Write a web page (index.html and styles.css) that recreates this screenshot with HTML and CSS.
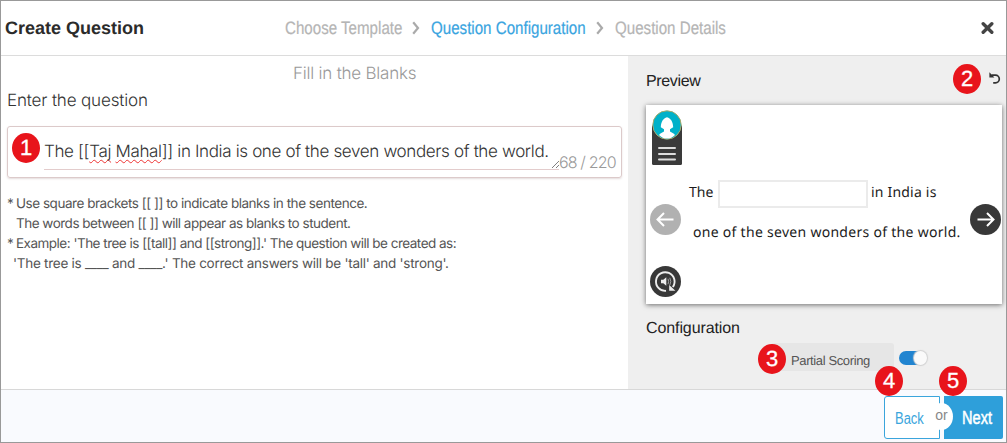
FILE: index.html
```html
<!DOCTYPE html>
<html lang="en">
<head>
<meta charset="utf-8">
<title>Create Question</title>
<link rel="stylesheet" href="styles.css">
</head>
<body>
<div class="dialog">
  <header class="header">
    <h1 class="title">Create Question</h1>
    <nav class="steps">
      <span class="step step-choose"><span class="narrow">Choose Template</span></span>
      <svg class="chevron" width="8" height="14" viewBox="0 0 8 14"><path d="M1.2 1.2 6 7 1.2 12.8"/></svg>
      <span class="step step-config"><span class="narrow">Question Configuration</span></span>
      <svg class="chevron" width="8" height="14" viewBox="0 0 8 14"><path d="M1.2 1.2 6 7 1.2 12.8"/></svg>
      <span class="step step-details"><span class="narrow">Question Details</span></span>
    </nav>
    <svg class="close" width="13" height="12" viewBox="0 0 13 12"><path d="M2.2 1.8 10.8 10.2M10.8 1.8 2.2 10.2"/></svg>
  </header>
  <main class="body">
    <section class="editor">
      <div class="template-name">Fill in the Blanks</div>
      <label class="label">Enter the question</label>
      <div class="question-box">
        <div class="question-field">
          <span>The [[<span class="typo">Taj</span> <span class="typo">Mahal</span>]] in India is one of the seven wonders of the world.</span>
          <svg class="grip" width="7" height="7" viewBox="0 0 7 7"><path d="M0 7 7 0M4 7 7 4"/></svg>
        </div>
        <span class="count">68 / 220</span>
        <span class="marker marker-1">1</span>
      </div>
      <div class="hints">
        <p><span class="star">*</span><span class="hint-use">Use square brackets [[ ]] to indicate blanks in the sentence.</span></p>
        <p><span class="star"></span><span class="hint-words">The words between [[ ]] will appear as blanks to student.</span></p>
        <p><span class="star">*</span><span class="hint-example">Example: 'The tree is [[tall]] and [[strong]].' The question will be created as:</span></p>
        <p><span class="star short"></span><span class="hint-result">'The tree is ____ and ____.' The correct answers will be 'tall' and 'strong'.</span></p>
      </div>
    </section>
    <aside class="side">
      <div class="side-head">
        <h2 class="side-title preview-title">Preview</h2>
        <svg class="reset" width="12" height="12" viewBox="0 0 12 12"><path class="arc" d="M2.500 3.200H6.500a3.800 3.800 0 0 1 0 7.600H4.200"/><path class="head" d="M.4 .2V5.400H5.400Z"/></svg>
        <span class="marker marker-2">2</span>
      </div>
      <div class="preview">
        <div class="rail">
          <svg width="30" height="56" viewBox="0 0 30 56">
            <rect x="0" y="15" width="30" height="40" rx="1.5" fill="#3a3a3a"/>
            <circle cx="15" cy="15" r="14.2" fill="#00b1c9" stroke="#a6aa6b" stroke-width="1"/>
            <path d="M15 7.200c-3.800.8-6 4.800-6.200 10l3.200 2v2.300c-1.800 1.200-3.600 1.700-5 3.400q3.500 3.600 8 3.700 4.500-.1 8-3.700c-1.400-1.700-3.200-2.200-5-3.400v-2.300l3.200-2c-.2-5.200-2.400-9.200-6.200-10Z" fill="#fff"/>
            <path d="M7 38h16M7 44h16M7 49.500h16" stroke="#ddd" stroke-width="2" stroke-linecap="round"/>
          </svg>
          <svg class="prev" width="31" height="31" viewBox="0 0 31 31"><circle cx="15.500" cy="15.500" r="15.500" fill="#b1b1b1"/><path d="M23.500 15.500H8M14 9 7.500 15.500 14 22" class="arrow"/></svg>
          <svg class="replay" width="31" height="31" viewBox="0 0 31 31"><circle cx="15.500" cy="15.500" r="15.500" fill="#383838"/><path d="M16 24.800A9.300 9.300 0 1 1 22.800 21" class="ring"/><path d="M19.200 19v5.800h6.200Z" fill="#eee"/><path d="M11 13.800h2.300l3-2.600v8.600l-3-2.600H11Z" fill="#eee"/><path d="M18 12.800q1.300 2.700 0 5.400M19.800 11.800q2 3.700 0 7.400" fill="none" stroke="#bbb" stroke-width=".8"/></svg>
        </div>
        <div class="sentence">
          <div class="line-one"><span class="before">The</span><span class="blank"></span><span class="after">in India is</span></div>
          <div class="line-two">one of the seven wonders of the world.</div>
        </div>
        <svg class="next-arrow" width="31" height="31" viewBox="0 0 31 31"><circle cx="15.500" cy="15.500" r="15.500" fill="#383838"/><path d="M7.500 15.500H23M17 9 23.500 15.500 17 22" class="arrow"/></svg>
      </div>
      <h2 class="side-title config-title">Configuration</h2>
      <div class="config-row">
        <div class="config-label"><span>Partial Scoring</span><span class="marker marker-3">3</span></div>
        <span class="toggle"><span class="knob"></span></span>
      </div>
    </aside>
  </main>
  <footer class="footer">
    <button class="btn back"><span class="btn-text">Back</span><span class="marker marker-4">4</span></button>
    <button class="btn next"><span class="btn-text">Next</span><span class="or">or</span><span class="marker marker-5">5</span></button>
  </footer>
</div>
</body>
</html>
```
FILE: styles.css
```css
* { box-sizing: border-box; }
body { margin: 0; font-family: "Liberation Sans", Arial, sans-serif; background: #fff; text-rendering: geometricPrecision; }
h1, h2, p { margin: 0; font-weight: 400; }
span { white-space: nowrap; }
svg { display: block; flex: none; }

.dialog { width: 1007px; height: 443px; border: 1px solid #999; display: flex; flex-direction: column; overflow: hidden; }

.header { height: 55px; border-bottom: 1px solid #dcdcdc; display: flex; align-items: center; flex: none; }
.title { width: 279px; padding-left: 4px; font-size: 18px; line-height: 22px; font-weight: 700; color: #2b2b2b; }
.steps { display: flex; align-items: center; width: 695px; }
.step { display: block; flex: none; padding-left: 5px; font-size: 18px; line-height: 22px; color: #b5b5b5; }
.narrow { display: inline-block; transform: scaleX(.84); transform-origin: 0 50%; -webkit-text-stroke: .2px currentColor; }
.step-choose { width: 132px; }
.step-config { width: 170px; margin-left: 6px; color: #3aa5df; }
.step-details { margin-left: 6px; }
.chevron path { fill: none; stroke: #aaa; stroke-width: 2.2; }
.close path { stroke: #444; stroke-width: 3.4; stroke-linecap: round; }
.close { margin-left: 6px; }

.body { height: 333px; display: flex; flex: none; }
.editor { width: 627px; font-family: Inter, "Liberation Sans", sans-serif; font-weight: 300; }
.template-name { height: 31px; padding: 6px 0 0 292px; font-size: 17px; line-height: 24px; letter-spacing: -.22px; color: #999; }
.label { display: block; height: 39px; padding: 2px 0 0 6px; font-size: 17px; line-height: 24px; letter-spacing: -.15px; color: #333; }
.question-box { position: relative; display: flex; width: 615px; height: 52px; margin-left: 6px; border: 1px solid #dccaca; border-radius: 3px; box-shadow: 0 1px 2px rgba(120, 80, 80, .2); }
.question-field { display: flex; justify-content: space-between; width: 515px; height: 43px; margin-left: 36px; padding: 13px 0 0 0; border-bottom: 1px solid #e3cccc; font-size: 17px; line-height: 24px; letter-spacing: -.35px; color: #333; }
.typo { text-decoration: underline wavy #e33 1px; text-decoration-skip-ink: none; text-underline-offset: 2px; }
.grip { margin-top: 21px; }
.grip path { stroke: #333; stroke-width: .9; stroke-dasharray: 1 .4; }
.count { padding-top: 25px; font-size: 16px; line-height: 20px; letter-spacing: -.85px; color: #999; }
.hints { padding: 16px 0 0 6px; font-size: 13.5px; font-weight: 200; color: #555; }
.hints p { display: flex; height: 20px; line-height: 20px; }
.star { width: 9px; flex: none; }
.star.short { width: 6px; }
.hint-use { letter-spacing: -.47px; }
.hint-words { letter-spacing: -.5px; }
.hint-example { letter-spacing: -.51px; }
.hint-result { letter-spacing: -.27px; }

.side { flex: 1; background: #efefef; font-family: "Liberation Sans", Arial, sans-serif; }
.side-head { position: relative; display: flex; justify-content: space-between; height: 49px; padding: 15px 5px 0 18px; }
.side-title { font-size: 16px; line-height: 22px; color: #222; }
.preview-title { letter-spacing: -.35px; }
.reset { margin-top: 1px; }
.reset .arc { fill: none; stroke: #333; stroke-width: 1.7; }
.reset .head { fill: #333; }
.preview { display: flex; width: 356px; height: 199px; margin-left: 18px; background: #fff; box-shadow: 0 1px 5px rgba(0, 0, 0, .55); }
.rail { width: 43px; padding: 5px 0 0 4px; }
.rail svg:first-child { margin-left: 2px; }
.prev { margin-top: 38px; }
.replay { margin-top: 31px; }
.arrow { fill: none; stroke: #fff; stroke-width: 2; }
.ring { fill: none; stroke: #eee; stroke-width: 1.9; }
.sentence { width: 281px; padding-top: 75px; font-family: "Noto Sans", sans-serif; font-size: 14px; color: #1c1c1c; }
.line-one { display: flex; line-height: 26px; }
.before { width: 29px; }
.blank { width: 150px; height: 28px; border: 2px solid #ebebeb; margin-right: 3px; }
.after { letter-spacing: .2px; }
.line-two { padding: 13px 0 0 4px; line-height: 24px; letter-spacing: .29px; white-space: nowrap; }
.next-arrow { margin-top: 99px; }
.config-title { margin-top: 14px; padding-left: 18px; letter-spacing: -.1px; }
.config-row { display: flex; margin: 3px 0 0 143px; }
.config-label { position: relative; width: 123px; height: 28px; padding: 8px 0 0 20px; border-radius: 3px; background: #e6e6e6; font-size: 13px; line-height: 20px; letter-spacing: -.38px; color: #555; }
.toggle { display: flex; justify-content: flex-end; width: 28px; height: 14px; margin: 8px 0 0 5px; border-radius: 7px; background: #2184d0; }
.knob { width: 13px; height: 14px; border-radius: 50%; background: #fafafa; box-shadow: 0 0 1px 1px #d2d2d2; }

.footer { flex: 1; display: flex; padding: 6px 0 0 883px; border-top: 1px solid #d8d8d8; background: #f9fafe; }
.btn { position: relative; height: 43px; padding: 2px 0 0; border: 0; font-family: "Liberation Sans", Arial, sans-serif; font-size: 16px; text-align: left; }
.btn-text { display: inline-block; transform: scaleX(.81); transform-origin: 0 50%; }
.back { width: 56px; border: 1px solid #3ba5dc; border-radius: 3px 0 0 3px; background: #fff; color: #3ba5dc; padding-left: 10px; }
.next { width: 59px; margin-left: 4px; border-radius: 0 2px 2px 0; background: #2e9fda; color: #fff; padding-left: 18px; font-size: 18px; -webkit-text-stroke: .5px #fff; }
.or { position: absolute; left: -14px; top: 7px; width: 23px; height: 27px; border-radius: 50%; background: #fff; color: #888; font-size: 14px; line-height: 25px; text-align: center; -webkit-text-stroke: 0; }

.marker { position: absolute; width: 28px; height: 30px; border-radius: 50%; background: #e8141b; color: #fff; font-family: "Liberation Sans", Arial, sans-serif; font-size: 22px; line-height: 30px; font-weight: 400; letter-spacing: 0; text-align: center; -webkit-text-stroke: .3px #fff; }
.marker-1 { left: 4px; top: 6px; }
.marker-2 { left: 325px; top: 8px; }
.marker-3 { left: -13px; top: 1px; }
.marker-4 { left: -10px; top: -31px; }
.marker-5 { left: -5px; top: -30px; }
```
